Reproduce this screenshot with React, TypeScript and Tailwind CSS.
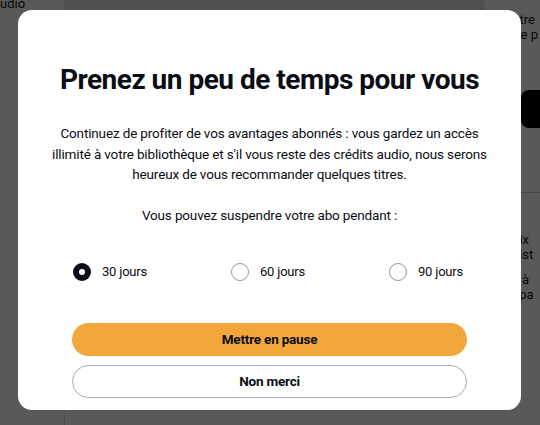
import React, { useState } from 'react';

const options = ['30 jours', '60 jours', '90 jours'];

const Radio = ({ checked }: { checked: boolean }) =>
  checked ? (
    <span className="flex h-[18px] w-[18px] items-center justify-center rounded-full bg-[#0b0d14]">
      <span className="h-[6px] w-[6px] rounded-full bg-white" />
    </span>
  ) : (
    <span className="h-[18px] w-[18px] rounded-full border-[1.5px] border-[#8f96a6] bg-white" />
  );

const Background = () => (
  <div className="flex h-full w-full bg-white text-[13px] text-[#111]">
    <div className="w-[65px] shrink-0 overflow-hidden border-r border-[#ddd]">
      <p className="-mt-[4px] whitespace-nowrap leading-[15px]">udio</p>
    </div>
    <div className="flex flex-1 flex-col">
      <div className="h-[10px] w-[420px] bg-[#e6e6e6]" />
      <div className="flex flex-1">
        <div className="flex-1" />
        <div className="flex w-[28px] flex-col overflow-hidden whitespace-nowrap pt-[2px] leading-[15px]">
          <p>otre</p>
          <p>tre p</p>
          <div className="ml-[9px] mt-[48px] h-[38px] w-[40px] rounded-lg bg-black" />
          <div className="mt-[64px] border-t border-[#ccc]" />
          <p className="mt-[12px]">:</p>
          <p className="mt-[12px]">oix</p>
          <p>hist</p>
          <p className="mt-[10px]">s à</p>
          <p>ppa</p>
        </div>
      </div>
    </div>
  </div>
);

export default function App() {
  const [selected, setSelected] = useState(0);
  return (
    <div className="relative h-[425px] w-[540px] overflow-hidden font-['Roboto',sans-serif]">
      <Background />
      <div className="absolute inset-0 bg-black/65" />
      <div className="absolute left-[18px] top-[10px] flex h-[400px] w-[503px] flex-col items-center rounded-[14px] bg-white px-[28px] pb-[13px] pt-[53px] text-[#0b0d14]">
        <h1 className="whitespace-nowrap text-[28px] font-bold leading-[34px] tracking-[-0.5px]">Prenez un peu de temps pour vous</h1>
        <p className="mt-[26px] text-center text-[13.5px] leading-[20.5px] tracking-[-0.15px]">
          Continuez de profiter de vos avantages abonnés : vous gardez un accès illimité à votre bibliothèque et s'il vous reste des crédits audio, nous serons heureux de vous recommander quelques titres.
        </p>
        <p className="mt-[20px] text-center text-[13.5px] leading-[20.5px] tracking-[-0.15px]">Vous pouvez suspendre votre abo pendant :</p>
        <div className="mt-[37px] grid w-[395px] grid-cols-[158px_158px_1fr] pl-[1px]">
          {options.map((o, i) => (
            <button key={o} onClick={() => setSelected(i)} className="flex h-[20px] items-center gap-[11px] text-[13px] tracking-[-0.2px]">
              <Radio checked={selected === i} />
              <span>{o}</span>
            </button>
          ))}
        </div>
        <div className="mt-[41px] flex w-[395px] flex-col gap-[9px]">
          <button className="h-[33px] w-full rounded-full bg-[#f2a73c] text-[13.5px] font-bold tracking-[-0.2px]">Mettre en pause</button>
          <button className="h-[33px] w-full rounded-full border-[1.5px] border-[#a3aabb] bg-white text-[13.5px] font-bold tracking-[-0.2px]">Non merci</button>
        </div>
      </div>
    </div>
  );
}
